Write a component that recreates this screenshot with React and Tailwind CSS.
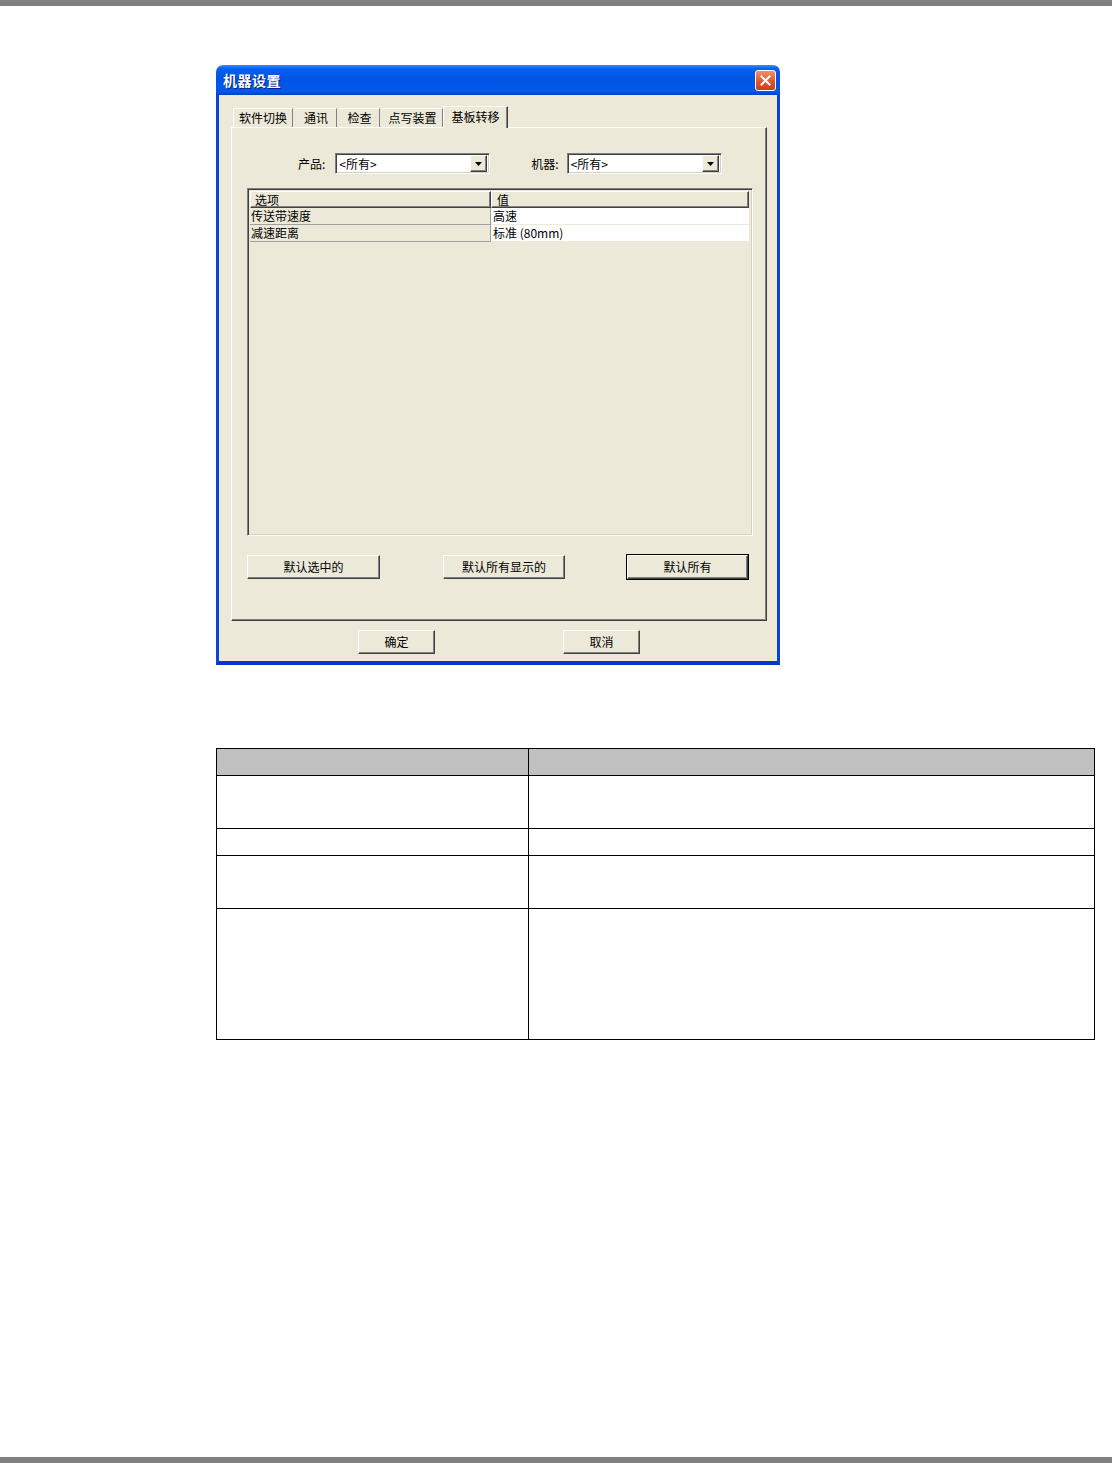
import React from 'react';

const font = "font-['Noto_Sans_CJK_SC','Noto_Sans',sans-serif]";

const raised =
  'border border-t-white border-l-white border-r-[#404040] border-b-[#404040] shadow-[inset_-1px_-1px_0_#808080]';
const sunken =
  'border border-t-[#808080] border-l-[#808080] border-r-white border-b-white shadow-[inset_1px_1px_0_#404040,inset_-1px_-1px_0_#d4d0c8]';

const ComboBox = ({ value, width }) => (
  <div className={`${sunken} bg-white h-[21px] flex items-center ${width}`}>
    <span className="flex-1 pl-[3px] text-[12px] leading-none text-black">{value}</span>
    <div className={`${raised} bg-[#ece9d8] w-[17px] h-[17px] mr-[2px] flex items-center justify-center`}>
      <svg width="7" height="4" viewBox="0 0 7 4">
        <path d="M0 0h7L3.5 4z" fill="#000" />
      </svg>
    </div>
  </div>
);

const Button = ({ children, width, isDefault }) => (
  <div className={isDefault ? 'border border-black' : ''}>
    <div
      className={`${raised} bg-[#ece9d8] h-[24px] ${width} flex items-center justify-center text-[12px] text-black`}
    >
      {children}
    </div>
  </div>
);

// label, width in px of each inactive tab
const tabs = [
  ['软件切换', 'w-[60px]'],
  ['通讯', 'w-[42px]'],
  ['检查', 'w-[41px]'],
  ['点写装置', 'w-[61px]'],
];

const rows = [
  ['传送带速度', '高速'],
  ['减速距离', '标准 (80mm)'],
];

const Dialog = () => (
  <div className={`w-[564px] h-[600px] flex flex-col ${font}`}>
    {/* Title bar */}
    <div className="h-[30px] rounded-t-[7px] bg-[linear-gradient(180deg,#3a8cff_0%,#0a5ff0_12%,#0054e3_45%,#0058ee_88%,#0043c4_100%)] flex items-center justify-between pl-[7px] pr-[4px]">
      <span className="text-white font-bold text-[14px] tracking-[0.5px] [text-shadow:1px_1px_0_#0a1e7a]">机器设置</span>
      <div className="w-[21px] h-[21px] rounded-[3px] border border-white bg-[linear-gradient(180deg,#f0906c,#e0512a_60%,#c8401c)] flex items-center justify-center">
        <svg width="11" height="11" viewBox="0 0 11 11">
          <path d="M1.5 1.5l8 8M9.5 1.5l-8 8" stroke="#fff" strokeWidth="2" strokeLinecap="square" />
        </svg>
      </div>
    </div>

    {/* Body */}
    <div className="flex-1 flex flex-col bg-[#ece9d8] border-x-[3px] border-b-[4px] border-x-[#0847d6] border-b-[#0735c4]">
      <div className="pl-[12px] pr-[10px] pt-[11px]">
        {/* Tab strip */}
        <div className="flex items-end h-[21px] text-[12px] text-black">
          {tabs.map(([t, w], i) => (
            <div
              key={t}
              className={`${w} h-[19px] flex items-center justify-center border-l border-t border-r ${
                i === 0 ? 'border-l-white' : 'border-l-transparent'
              } border-t-white border-r-[#808080] ml-[2px]`}
            >
              {t}
            </div>
          ))}
          <div className="relative z-10 -mb-[1px] w-[65px] h-[22px] flex items-start justify-center pt-[1px] bg-[#ece9d8] border-l border-t border-r border-l-white border-t-white border-r-[#404040] shadow-[inset_-1px_0_0_#808080]">
            基板转移
          </div>
        </div>

        {/* Tab panel */}
        <div className="h-[494px] border border-t-white border-l-white border-r-[#404040] border-b-[#404040] shadow-[inset_-1px_-1px_0_#808080] flex flex-col">
          <div className="flex items-center mt-[25px] text-[12px] text-black">
            <span className="ml-[66px] mr-[10px]">产品:</span>
            <ComboBox value="<所有>" width="w-[155px]" />
            <span className="ml-[41px] mr-[8px]">机器:</span>
            <ComboBox value="<所有>" width="w-[155px]" />
          </div>

          {/* List view */}
          <div className={`${sunken} ml-[15px] mt-[14px] w-[506px] h-[348px] bg-[#ece9d8] p-[2px]`}>
            <div className="flex h-[17px] text-[12px] leading-none text-black">
              <div className={`${raised} w-[241px] flex items-center pl-[4px]`}>选项</div>
              <div className={`${raised} w-[258px] flex items-center pl-[5px]`}>值</div>
            </div>
            {rows.map(([k, v]) => (
              <div key={k} className="flex h-[17px] text-[12px] leading-none text-black">
                <div className="w-[241px] flex items-center pl-[1px] border-r border-b border-r-[#a0a0a0] border-b-[#a0a0a0]">{k}</div>
                <div className="w-[258px] flex items-center pl-[2px] bg-white border-b border-b-[#ece9d8]">{v}</div>
              </div>
            ))}
          </div>

          {/* Default buttons */}
          <div className="flex items-center mt-[18px] text-[12px]">
            <div className="ml-[15px]">
              <Button width="w-[133px]">默认选中的</Button>
            </div>
            <div className="ml-[63px]">
              <Button width="w-[122px]">默认所有显示的</Button>
            </div>
            <div className="ml-[61px]">
              <Button width="w-[121px]" isDefault>默认所有</Button>
            </div>
          </div>
        </div>

        {/* OK / Cancel */}
        <div className="flex mt-[9px]">
          <div className="ml-[127px]">
            <Button width="w-[77px]">确定</Button>
          </div>
          <div className="ml-[128px]">
            <Button width="w-[77px]">取消</Button>
          </div>
        </div>
      </div>
    </div>
  </div>
);

const tableRows = ['h-[53px]', 'h-[27px]', 'h-[53px]', 'h-[131px]'];

const App = () => (
  <div className="w-[1112px] h-[1463px] bg-white flex flex-col">
    <div className="h-[6px] bg-[#808080]" />
    <div className="flex-1">
      <div className="ml-[216px] mt-[59px]">
        <Dialog />
      </div>

      <table className="ml-[216px] mt-[83px] w-[879px] border-collapse">
        <tbody>
          <tr className="h-[27px] bg-[#c0c0c0]">
            <td className="w-[312px] border-[1.5px] border-black" />
            <td className="border-[1.5px] border-black" />
          </tr>
          {tableRows.map((h, i) => (
            <tr key={i} className={h}>
              <td className="border-[1.5px] border-black" />
              <td className="border-[1.5px] border-black" />
            </tr>
          ))}
        </tbody>
      </table>
    </div>
    <div className="h-[6px] bg-[#808080]" />
  </div>
);

export default App;
